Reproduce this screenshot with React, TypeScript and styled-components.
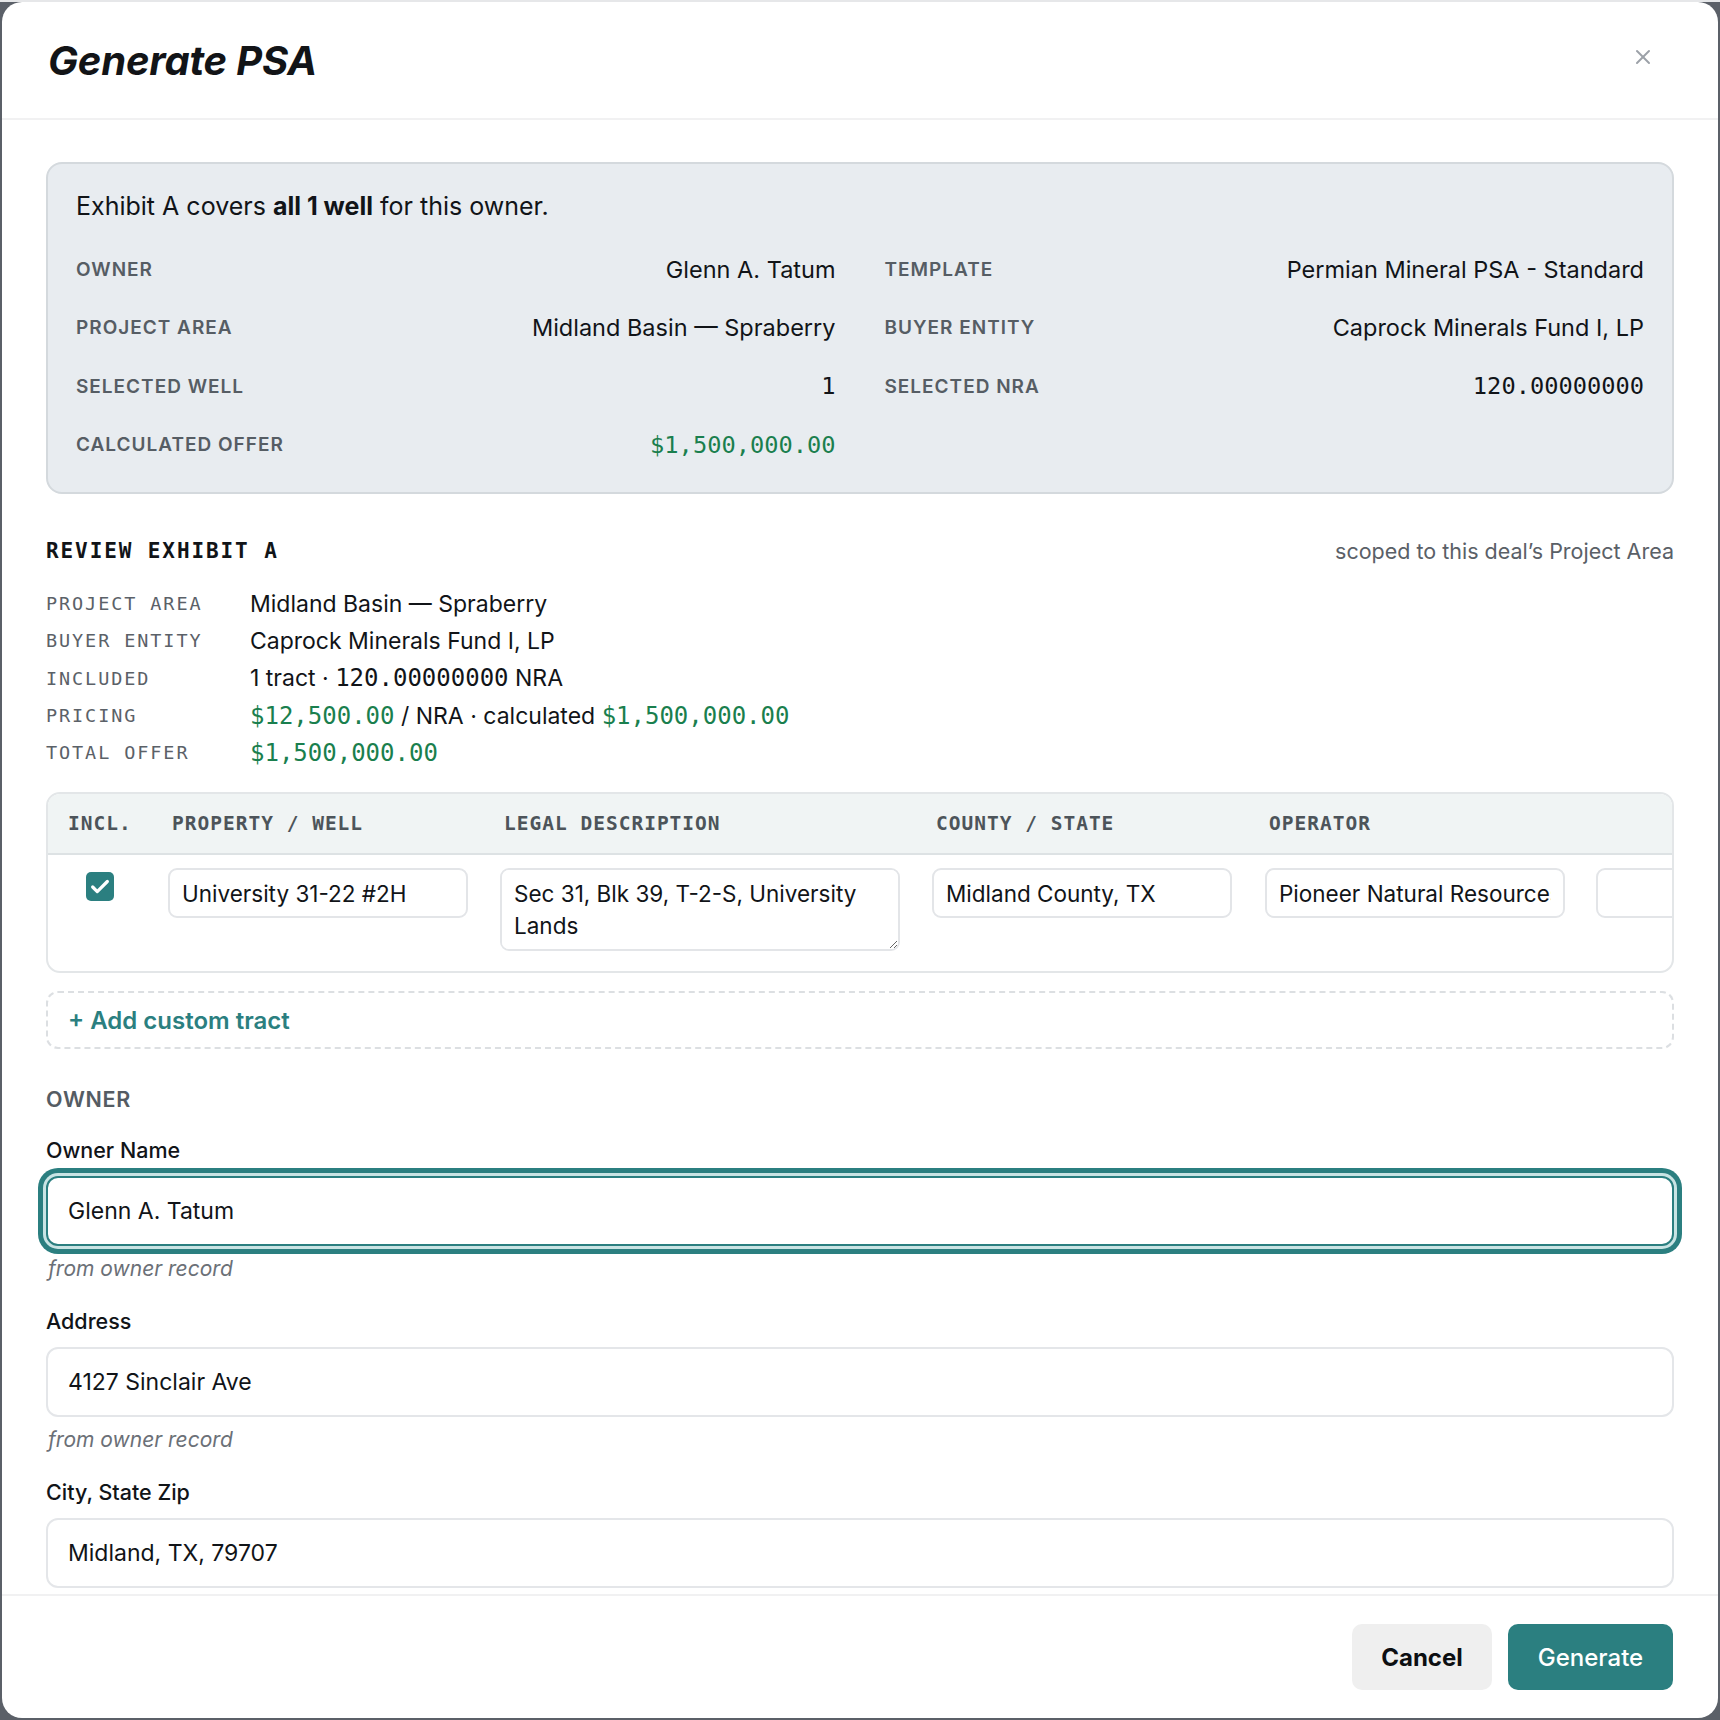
import styled, { createGlobalStyle } from "styled-components";
import { X, Check } from "lucide-react";

const SANS = `Inter, "Noto Sans", sans-serif`;
const MONO = `"DejaVu Sans Mono", "Liberation Mono", monospace`;
const TEAL = "#2b7f80";
const GREEN = "#1a7f4e";

const GlobalStyle = createGlobalStyle`
  html, body {
    margin: 0;
    padding: 0;
    background: #5b6068;
  }
  body {
    font-family: ${SANS};
    color: #111418;
  }
  * {
    box-sizing: border-box;
  }
`;

const Backdrop = styled.div`
  width: 1720px;
  height: 1720px;
  padding: 0 2px 2px;
  border-top: 2px solid #e6e7e9;
`;

const Modal = styled.div`
  width: 100%;
  height: 100%;
  background: #fff;
  border-radius: 20px;
  display: flex;
  flex-direction: column;
  overflow: hidden;
`;

const Header = styled.header`
  height: 118px;
  flex-shrink: 0;
  display: flex;
  align-items: center;
  justify-content: space-between;
  padding: 0 55px 0 46px;
  border-bottom: 2px solid #f1f1f2;
`;

const Title = styled.h2`
  margin: 0;
  font-size: 40px;
  font-weight: 700;
  font-style: italic;
  letter-spacing: -0.2px;
  color: #121417;
`;

const CloseButton = styled.button`
  width: 40px;
  height: 40px;
  border: none;
  background: none;
  padding: 0;
  display: flex;
  align-items: center;
  justify-content: center;
  color: #9ca1a8;
  margin-top: -6px;
`;

const Body = styled.div`
  flex: 1;
  overflow: hidden;
  padding: 42px 44px 0 44px;
`;

const SummaryCard = styled.section`
  border: 2px solid #d4d9dd;
  background: #e8ecf0;
  border-radius: 16px;
  padding: 26px 28px 18px;
`;

const Intro = styled.p`
  margin: 0 0 18px;
  font-size: 25px;
  line-height: 32px;
`;

const SummaryGrid = styled.div`
  display: grid;
  grid-template-columns: 1fr 1fr;
  column-gap: 49px;
  grid-auto-rows: 58.5px;
`;

const SummaryItem = styled.div`
  display: flex;
  align-items: center;
  justify-content: space-between;
`;

const SummaryLabel = styled.span`
  font-size: 19px;
  font-weight: 600;
  letter-spacing: 1px;
  text-transform: uppercase;
  color: #565d64;
`;

const SummaryValue = styled.span<{ $mono?: boolean; $green?: boolean }>`
  font-family: ${(p) => (p.$mono ? MONO : SANS)};
  font-size: ${(p) => (p.$mono ? 23.7 : 23.5)}px;
  color: ${(p) => (p.$green ? GREEN : "#111418")};
`;

const ReviewHeader = styled.div`
  margin-top: 43px;
  height: 28px;
  display: flex;
  align-items: center;
  justify-content: space-between;
`;

const ReviewTitle = styled.h3`
  margin: 0;
  font-family: ${MONO};
  font-size: 21px;
  font-weight: 700;
  letter-spacing: 1.9px;
  color: #111418;
`;

const ScopeNote = styled.span`
  font-size: 21.5px;
  color: #5a6067;
`;

const DefList = styled.dl`
  margin: 20px 0 0;
  display: grid;
  grid-template-columns: 204px 1fr;
  grid-auto-rows: 37.3px;
  align-items: center;
`;

const DefLabel = styled.dt`
  font-family: ${MONO};
  font-size: 18.5px;
  letter-spacing: 1.9px;
  color: #5b6168;
`;

const DefValue = styled.dd`
  margin: 0;
  font-size: 23px;
  color: #111418;
`;

const Mono = styled.span<{ $green?: boolean }>`
  font-family: ${MONO};
  font-size: 24px;
  color: ${(p) => (p.$green ? GREEN : "#111418")};
`;

const COLS = "120px 332px 432px 333px 331px 331px";

const TableCard = styled.div`
  margin-top: 21px;
  border: 2px solid #e3e6e8;
  border-radius: 14px;
  overflow: hidden;
`;

const TableHead = styled.div`
  display: grid;
  grid-template-columns: ${COLS};
  height: 61px;
  align-items: center;
  background: #f0f4f4;
  border-bottom: 2px solid #dde2e4;
`;

const HeadCell = styled.div<{ $first?: boolean }>`
  padding-left: ${(p) => (p.$first ? 20 : 4)}px;
  font-family: ${MONO};
  font-size: 19.5px;
  font-weight: 700;
  letter-spacing: 1px;
  color: #4d545a;
  white-space: nowrap;
`;

const TableRow = styled.div`
  display: grid;
  grid-template-columns: ${COLS};
  align-items: start;
  padding: 13px 0 20px;
`;

const CheckCell = styled.div`
  padding: 4px 0 0 38px;
`;

const Checkbox = styled.span`
  width: 28px;
  height: 29px;
  border-radius: 5px;
  background: ${TEAL};
  color: #fff;
  display: flex;
  align-items: center;
  justify-content: center;
`;

const CellInput = styled.input`
  width: 300px;
  height: 50px;
  border: 2px solid #e3e5e8;
  border-radius: 9px;
  padding: 0 12px;
  font-family: ${SANS};
  font-size: 22.5px;
  color: #111418;
  background: #fff;
  outline: none;
`;

const CellTextarea = styled.textarea`
  display: block;
  width: 400px;
  height: 83px;
  border: 2px solid #e3e5e8;
  border-radius: 9px;
  padding: 8px 12px;
  font-family: ${SANS};
  font-size: 22.5px;
  line-height: 32px;
  color: #111418;
  background: #fff;
  outline: none;
`;

const AddTract = styled.button`
  margin-top: 18px;
  width: 100%;
  height: 58px;
  border: 2px dashed #dcdfe2;
  border-radius: 12px;
  background: #fff;
  display: flex;
  align-items: center;
  padding: 0 0 0 20px;
  font-family: ${SANS};
  font-size: 24px;
  font-weight: 600;
  color: ${TEAL};
`;

const SectionHeading = styled.h4`
  margin: 36px 0 0;
  font-size: 21.5px;
  line-height: 28px;
  font-weight: 600;
  letter-spacing: 0.7px;
  color: #555c63;
`;

const Field = styled.div<{ $first?: boolean }>`
  margin-top: ${(p) => (p.$first ? 23 : 25)}px;
  display: flex;
  flex-direction: column;
`;

const FieldLabel = styled.label`
  font-size: 21.5px;
  line-height: 28px;
  font-weight: 500;
  color: #111418;
  margin-bottom: 12px;
`;

const FieldInput = styled.input<{ $focused?: boolean }>`
  width: 100%;
  height: 70px;
  border: 2px solid ${(p) => (p.$focused ? TEAL : "#e4e6e9")};
  border-radius: 12px;
  padding: 0 20px;
  font-family: ${SANS};
  font-size: 23px;
  color: #111418;
  background: #fff;
  outline: none;
  box-shadow: ${(p) =>
    p.$focused ? `0 0 0 3px #c9e4e4, 0 0 0 8px ${TEAL}` : "none"};
`;

const Hint = styled.span`
  margin-top: 10px;
  padding-left: 2px;
  font-size: 21px;
  line-height: 26px;
  font-style: italic;
  color: #6b7077;
`;

const Footer = styled.footer`
  height: 124px;
  flex-shrink: 0;
  border-top: 2px solid #f1f1f2;
  display: flex;
  align-items: center;
  justify-content: flex-end;
  gap: 16px;
  padding: 0 45px;
`;

const Button = styled.button<{ $primary?: boolean }>`
  height: 66px;
  width: ${(p) => (p.$primary ? 165 : 140)}px;
  border: none;
  border-radius: 10px;
  font-family: ${SANS};
  font-size: 24px;
  font-weight: ${(p) => (p.$primary ? 500 : 700)};
  background: ${(p) => (p.$primary ? TEAL : "#efefef")};
  color: ${(p) => (p.$primary ? "#fff" : "#0d0f12")};
`;

const summary = [
  { label: "Owner", value: "Glenn A. Tatum" },
  { label: "Template", value: "Permian Mineral PSA - Standard" },
  { label: "Project Area", value: "Midland Basin — Spraberry" },
  { label: "Buyer Entity", value: "Caprock Minerals Fund I, LP" },
  { label: "Selected Well", value: "1", mono: true },
  { label: "Selected NRA", value: "120.00000000", mono: true },
  { label: "Calculated Offer", value: "$1,500,000.00", mono: true, green: true },
];

const columns = [
  "INCL.",
  "PROPERTY / WELL",
  "LEGAL DESCRIPTION",
  "COUNTY / STATE",
  "OPERATOR",
  "",
];

export default function App() {
  return (
    <>
      <GlobalStyle />
      <Backdrop>
        <Modal>
          <Header>
            <Title>Generate PSA</Title>
            <CloseButton aria-label="Close">
              <X size={24} strokeWidth={2} />
            </CloseButton>
          </Header>

          <Body>
            <SummaryCard>
              <Intro>
                Exhibit A covers <b>all 1 well</b> for this owner.
              </Intro>
              <SummaryGrid>
                {summary.map((s) => (
                  <SummaryItem key={s.label}>
                    <SummaryLabel>{s.label}</SummaryLabel>
                    <SummaryValue $mono={s.mono} $green={s.green}>
                      {s.value}
                    </SummaryValue>
                  </SummaryItem>
                ))}
              </SummaryGrid>
            </SummaryCard>

            <ReviewHeader>
              <ReviewTitle>REVIEW EXHIBIT A</ReviewTitle>
              <ScopeNote>scoped to this deal’s Project Area</ScopeNote>
            </ReviewHeader>

            <DefList>
              <DefLabel>PROJECT AREA</DefLabel>
              <DefValue>Midland Basin — Spraberry</DefValue>
              <DefLabel>BUYER ENTITY</DefLabel>
              <DefValue>Caprock Minerals Fund I, LP</DefValue>
              <DefLabel>INCLUDED</DefLabel>
              <DefValue>
                1 tract · <Mono>120.00000000</Mono> NRA
              </DefValue>
              <DefLabel>PRICING</DefLabel>
              <DefValue>
                <Mono $green>$12,500.00</Mono> / NRA · calculated{" "}
                <Mono $green>$1,500,000.00</Mono>
              </DefValue>
              <DefLabel>TOTAL OFFER</DefLabel>
              <DefValue>
                <Mono $green>$1,500,000.00</Mono>
              </DefValue>
            </DefList>

            <TableCard>
              <TableHead>
                {columns.map((c, i) => (
                  <HeadCell key={i} $first={i === 0}>
                    {c}
                  </HeadCell>
                ))}
              </TableHead>
              <TableRow>
                <CheckCell>
                  <Checkbox>
                    <Check size={22} strokeWidth={3.5} />
                  </Checkbox>
                </CheckCell>
                <div>
                  <CellInput defaultValue="University 31-22 #2H" />
                </div>
                <div>
                  <CellTextarea defaultValue="Sec 31, Blk 39, T-2-S, University Lands" />
                </div>
                <div>
                  <CellInput defaultValue="Midland County, TX" />
                </div>
                <div>
                  <CellInput defaultValue="Pioneer Natural Resources" />
                </div>
                <div>
                  <CellInput defaultValue="" />
                </div>
              </TableRow>
            </TableCard>

            <AddTract>+ Add custom tract</AddTract>

            <SectionHeading>OWNER</SectionHeading>

            <Field $first>
              <FieldLabel>Owner Name</FieldLabel>
              <FieldInput $focused defaultValue="Glenn A. Tatum" />
              <Hint>from owner record</Hint>
            </Field>
            <Field>
              <FieldLabel>Address</FieldLabel>
              <FieldInput defaultValue="4127 Sinclair Ave" />
              <Hint>from owner record</Hint>
            </Field>
            <Field>
              <FieldLabel>City, State Zip</FieldLabel>
              <FieldInput defaultValue="Midland, TX, 79707" />
            </Field>
          </Body>

          <Footer>
            <Button>Cancel</Button>
            <Button $primary>Generate</Button>
          </Footer>
        </Modal>
      </Backdrop>
    </>
  );
}
